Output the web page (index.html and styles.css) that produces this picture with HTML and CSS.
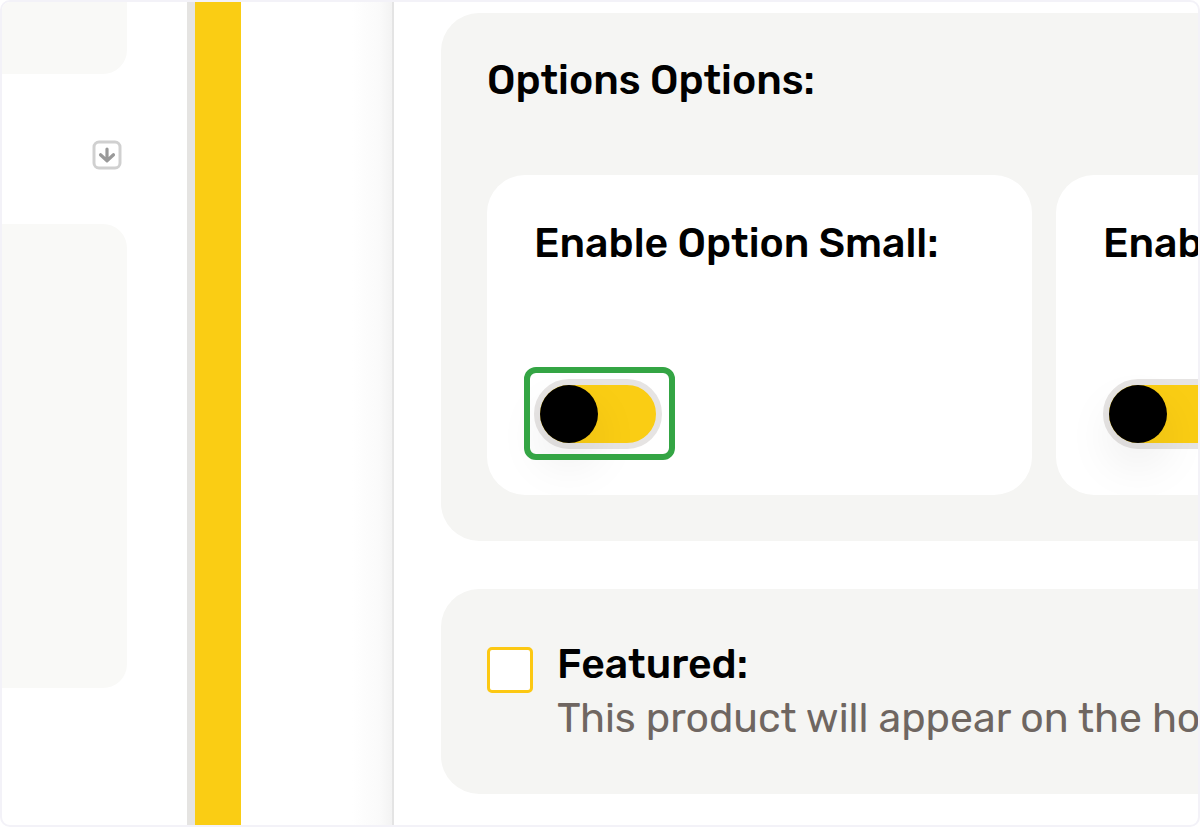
FILE: index.html
```html
<!DOCTYPE html>
<html lang="en">
<head>
<meta charset="utf-8">
<meta name="viewport" content="width=device-width, initial-scale=1">
<title>Product options</title>
<link rel="stylesheet" href="styles.css">
</head>
<body>
<div class="frame">
  <aside class="sidebar">
    <div class="block block-top"></div>
    <div class="sidebar-tools">
      <button class="collapse" type="button" aria-label="Move down">
        <svg width="30" height="30" viewBox="0 0 30 30" fill="none" stroke-linecap="round" stroke-linejoin="round" aria-hidden="true">
          <rect x="2" y="2" width="26" height="26" rx="5" stroke="#d0d0d0" stroke-width="3"/>
          <path d="M15 9v11.500M8.500 14.800l6.500 6 6.500-6" stroke="#999" stroke-width="3.200"/>
        </svg>
      </button>
    </div>
    <div class="block block-main"></div>
  </aside>
  <div class="rail"></div>
  <div class="gutter"></div>
  <main class="panel">
    <section class="section">
      <h2 class="title">Options Options:</h2>
      <div class="cards">
        <div class="card">
          <label class="title" for="small">Enable Option Small:</label>
          <div class="control highlighted"><input class="switch" id="small" type="checkbox" role="switch"></div>
        </div>
        <div class="card">
          <label class="title" for="second">Enab</label>
          <div class="control"><input class="switch" id="second" type="checkbox" role="switch"></div>
        </div>
      </div>
    </section>
    <section class="section featured">
      <input class="check" id="featured" type="checkbox" aria-describedby="featured-note">
      <div class="featured-text">
        <label class="title" for="featured">Featured:</label>
        <p class="note" id="featured-note">This product will appear on the ho</p>
      </div>
    </section>
  </main>
</div>
</body>
</html>
```
FILE: styles.css
```css
* {
  box-sizing: border-box;
}

body {
  margin: 0;
  background: #fff;
  color: #000;
  font-family: Rubik, Roboto, "Liberation Sans", sans-serif;
  font-size: 41px;
  line-height: 48px;
}

.frame {
  display: flex;
  min-height: 100vh;
  border: 2px solid #f3f2f8;
  border-radius: 10px;
  overflow: hidden;
}

.sidebar {
  flex: none;
  width: 185px;
  padding-right: 60px;
}

.block {
  background: #f9f9f7;
}

.block-top {
  height: 72px;
  border-radius: 0 0 24px 0;
}

.block-main {
  height: 464px;
  border-radius: 0 24px 24px 0;
}

.sidebar-tools {
  display: flex;
  align-items: center;
  justify-content: flex-end;
  height: 150px;
  padding: 12px 5px 0 0;
}

.collapse {
  display: flex;
  padding: 0;
  border: 0;
  background: none;
}

.rail {
  flex: none;
  width: 54px;
  border-left: 8px solid #e5e4e2;
  background: #facd14;
}

.gutter {
  flex: none;
  width: 153px;
  border-right: 2px solid #e4e4e4;
  background: linear-gradient(to left, #f3f3f3, #fafafa 12px, #fff 40px);
}

.panel {
  flex: 1;
  min-width: 0;
  display: flex;
  flex-direction: column;
  gap: 48px;
  padding: 11px 0 30px 47px;
}

.section {
  padding: 43px 0 46px 46px;
  border-radius: 38px 0 0 38px;
  background: #f5f5f3;
}

.title {
  display: block;
  margin: 0;
  font-size: 41px;
  font-weight: 500;
  line-height: 48px;
}

.cards {
  display: flex;
  gap: 24px;
  margin-top: 71px;
  overflow: hidden;
}

.card {
  flex: none;
  width: 545px;
  padding: 44px 47px 46px;
  border-radius: 38px;
  background: #fff;
}

.control {
  position: relative;
  display: flex;
  width: 128px;
  margin-top: 112px;
}

.highlighted::after {
  content: "";
  position: absolute;
  inset: -12px -13px -11px -10px;
  border: 6px solid #34a544;
  border-radius: 12px;
  pointer-events: none;
}

.switch {
  appearance: none;
  width: 128px;
  height: 70px;
  margin: 0;
  border: 6px solid #e6e4e3;
  border-radius: 35px;
  background: #facd14;
}

.switch::before {
  content: "";
  display: block;
  width: 58px;
  height: 58px;
  border-radius: 50%;
  background: #000;
  box-shadow: 0 22px 48px rgba(0, 0, 0, 0.08);
}

.switch:checked::before {
  margin-left: auto;
}

.featured {
  display: flex;
  gap: 24px;
  padding: 51px 0 52px 46px;
  overflow: hidden;
}

.check {
  appearance: none;
  flex: none;
  width: 46px;
  height: 46px;
  margin: 7px 0 0;
  border: 3px solid #fcc812;
  border-radius: 5px;
  background: #fff;
}

.check:checked {
  background: #facd14;
}

.featured-text {
  min-width: 0;
}

.note {
  margin: 6px 0 0;
  color: #6f6661;
  white-space: nowrap;
}
```
